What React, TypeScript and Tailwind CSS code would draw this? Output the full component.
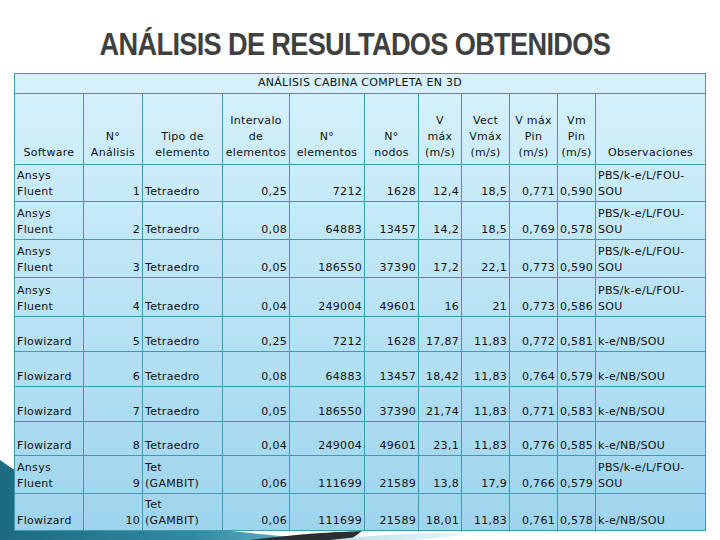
import React from 'react';

type Row = {
  sw: string[];
  n: number;
  tipo: string[];
  int: string;
  el: string;
  nodos: string;
  v: string;
  vect: string;
  vp: string;
  vm: string;
  obs: string[];
  h: string;
};

const PBS = ['PBS/k-e/L/FOU-', 'SOU'];
const KE = ['k-e/NB/SOU'];
const AF = ['Ansys', 'Fluent'];
const FW = ['Flowizard'];
const TET = ['Tetraedro'];
const GAM = ['Tet', '(GAMBIT)'];

const rows: Row[] = [
  { sw: AF, n: 1, tipo: TET, int: '0,25', el: '7212', nodos: '1628', v: '12,4', vect: '18,5', vp: '0,771', vm: '0,590', obs: PBS, h: 'h-[37px]' },
  { sw: AF, n: 2, tipo: TET, int: '0,08', el: '64883', nodos: '13457', v: '14,2', vect: '18,5', vp: '0,769', vm: '0,578', obs: PBS, h: 'h-[38px]' },
  { sw: AF, n: 3, tipo: TET, int: '0,05', el: '186550', nodos: '37390', v: '17,2', vect: '22,1', vp: '0,773', vm: '0,590', obs: PBS, h: 'h-[38px]' },
  { sw: AF, n: 4, tipo: TET, int: '0,04', el: '249004', nodos: '49601', v: '16', vect: '21', vp: '0,773', vm: '0,586', obs: PBS, h: 'h-[39px]' },
  { sw: FW, n: 5, tipo: TET, int: '0,25', el: '7212', nodos: '1628', v: '17,87', vect: '11,83', vp: '0,772', vm: '0,581', obs: KE, h: 'h-[35px]' },
  { sw: FW, n: 6, tipo: TET, int: '0,08', el: '64883', nodos: '13457', v: '18,42', vect: '11,83', vp: '0,764', vm: '0,579', obs: KE, h: 'h-[35px]' },
  { sw: FW, n: 7, tipo: TET, int: '0,05', el: '186550', nodos: '37390', v: '21,74', vect: '11,83', vp: '0,771', vm: '0,583', obs: KE, h: 'h-[35px]' },
  { sw: FW, n: 8, tipo: TET, int: '0,04', el: '249004', nodos: '49601', v: '23,1', vect: '11,83', vp: '0,776', vm: '0,585', obs: KE, h: 'h-[34px]' },
  { sw: AF, n: 9, tipo: GAM, int: '0,06', el: '111699', nodos: '21589', v: '13,8', vect: '17,9', vp: '0,766', vm: '0,579', obs: PBS, h: 'h-[38px]' },
  { sw: FW, n: 10, tipo: GAM, int: '0,06', el: '111699', nodos: '21589', v: '18,01', vect: '11,83', vp: '0,761', vm: '0,578', obs: KE, h: 'h-[37px]' }
];

const Lines = ({ lines }: { lines: string[] }) => <>
    {lines.map((l, i) => <React.Fragment key={i}>
        {i > 0 && <br />}
        {l}
      </React.Fragment>)}
  </>;

const cell = 'border border-[#3b9bb0] px-[2px] pb-[1px] align-bottom leading-[16px] whitespace-nowrap';
const num = `${cell} text-right`;
const txt = `${cell} text-left`;
const head = `${cell} text-center`;

// slide background swoosh along the bottom edge
const BottomDecor = () => <svg className="absolute left-0 bottom-0" width="720" height="80" viewBox="0 0 720 80">
    <defs>
      <linearGradient id="teal" x1="0" y1="0" x2="1" y2="0">
        <stop offset="0" stopColor="#1c6b80" />
        <stop offset="0.6" stopColor="#2f8aa0" />
        <stop offset="1" stopColor="#6fb9cc" />
      </linearGradient>
      <linearGradient id="light" x1="0" y1="0" x2="1" y2="0">
        <stop offset="0" stopColor="#b9dff0" />
        <stop offset="1" stopColor="#e9f6fb" />
      </linearGradient>
    </defs>
    <path d="M0 0 C40 30 120 60 260 74 L320 80 L0 80 Z" fill="url(#teal)" />
    <path d="M250 80 C300 74 330 72 362 71 L350 80 Z" fill="#2b2f33" />
    <path d="M330 80 C380 74 430 72 470 74 C440 78 420 80 400 80 Z" fill="url(#light)" />
  </svg>;

export default function App() {
  return <div className="relative w-[720px] h-[540px] overflow-hidden bg-white font-['DejaVu_Sans',sans-serif] text-[11px] text-[#111]">
      <BottomDecor />
      <div className="relative">
        <h1 className="pt-[24px] pr-[12px] h-[73px] text-center font-['Liberation_Sans',sans-serif] font-bold text-[32px] leading-[40px] tracking-[-0.8px] text-[#404040] scale-x-[0.85]">
          ANÁLISIS DE RESULTADOS OBTENIDOS
        </h1>
        <table className="ml-[14px] w-[691px] table-fixed border-collapse bg-gradient-to-b from-[#d6f2fc] to-[#9dd4ed] tracking-[0.3px]">
          <colgroup>
            <col className="w-[69px]" />
            <col className="w-[59px]" />
            <col className="w-[80px]" />
            <col className="w-[67px]" />
            <col className="w-[75px]" />
            <col className="w-[54px]" />
            <col className="w-[43px]" />
            <col className="w-[48px]" />
            <col className="w-[48px]" />
            <col className="w-[38px]" />
            <col className="w-[110px]" />
          </colgroup>
          <tbody>
            <tr className="h-[20px]">
              <td colSpan={11} className={`${head} align-middle pb-0`}>ANÁLISIS CABINA COMPLETA EN 3D</td>
            </tr>
            <tr className="h-[71px]">
              <td className={`${head} pb-[3px]`}>Software</td>
              <td className={`${head} pb-[3px]`}><Lines lines={['N°', 'Análisis']} /></td>
              <td className={`${head} pb-[3px]`}><Lines lines={['Tipo de', 'elemento']} /></td>
              <td className={`${head} pb-[3px]`}><Lines lines={['Intervalo', 'de', 'elementos']} /></td>
              <td className={`${head} pb-[3px]`}><Lines lines={['N°', 'elementos']} /></td>
              <td className={`${head} pb-[3px]`}><Lines lines={['N°', 'nodos']} /></td>
              <td className={`${head} pb-[3px]`}><Lines lines={['V', 'máx', '(m/s)']} /></td>
              <td className={`${head} pb-[3px]`}><Lines lines={['Vect', 'Vmáx', '(m/s)']} /></td>
              <td className={`${head} pb-[3px]`}><Lines lines={['V máx', 'Pin', '(m/s)']} /></td>
              <td className={`${head} pb-[3px]`}><Lines lines={['Vm', 'Pin', '(m/s)']} /></td>
              <td className={`${head} pb-[3px]`}>Observaciones</td>
            </tr>
            {rows.map(r => <tr key={r.n} className={r.h}>
                <td className={txt}><Lines lines={r.sw} /></td>
                <td className={num}>{r.n}</td>
                <td className={txt}><Lines lines={r.tipo} /></td>
                <td className={num}>{r.int}</td>
                <td className={num}>{r.el}</td>
                <td className={num}>{r.nodos}</td>
                <td className={num}>{r.v}</td>
                <td className={num}>{r.vect}</td>
                <td className={num}>{r.vp}</td>
                <td className={num}>{r.vm}</td>
                <td className={txt}><Lines lines={r.obs} /></td>
              </tr>)}
          </tbody>
        </table>
      </div>
    </div>;
}
